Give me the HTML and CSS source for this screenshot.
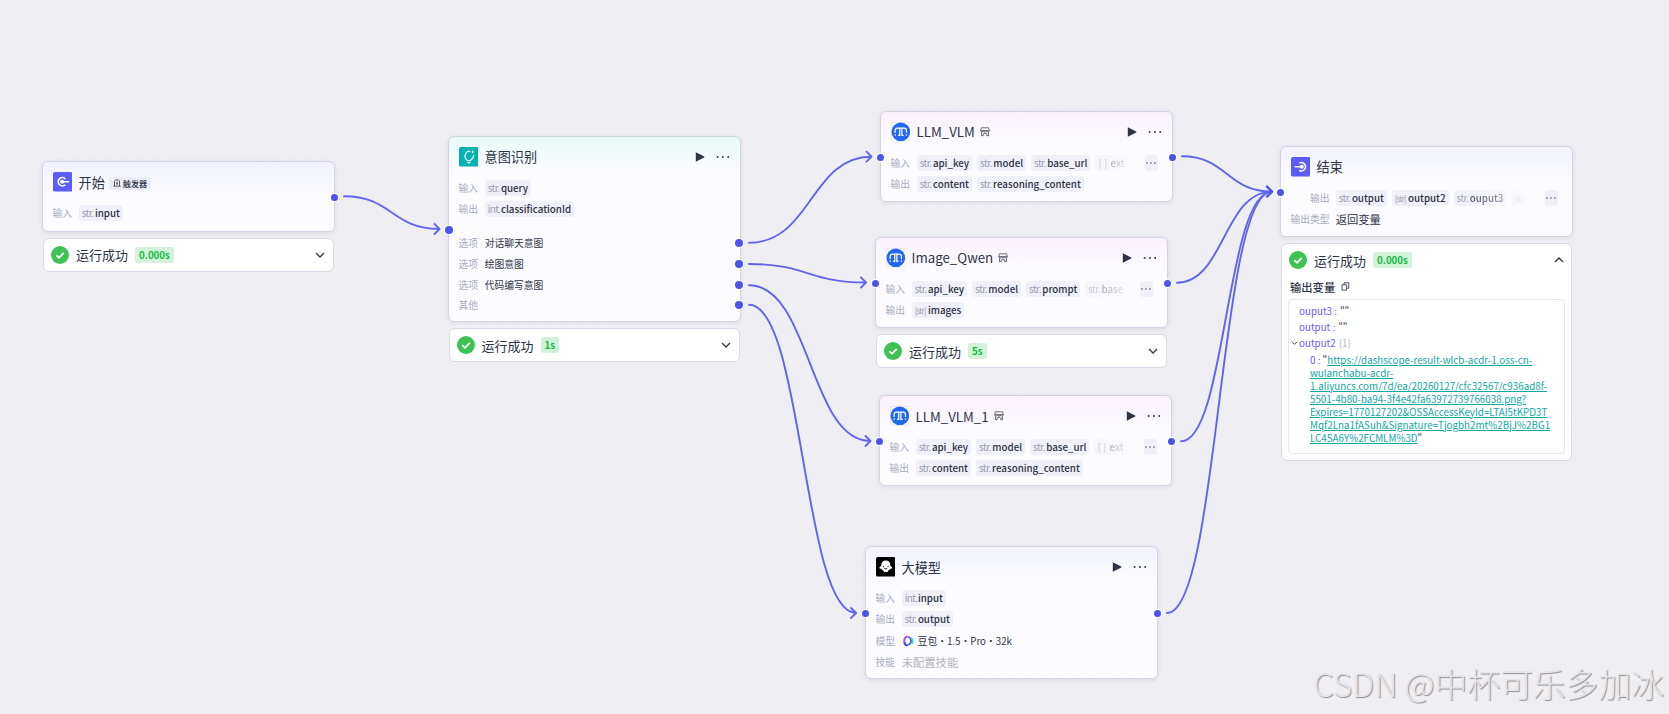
FILE: index.html
```html
<!DOCTYPE html>
<html lang="zh-CN">

<head>
<title>工作流</title>
<meta charset="utf-8" />
<meta name="viewport" content="width=device-width, initial-scale=1.0">
<link rel="stylesheet" href="styles.css">
</head>

<body>
<!-- shared icons -->
<svg class="defs" width="0" height="0">
  <symbol id="i-play" viewBox="0 0 10 10"><path d="M.8.3 9.200 4.600q.6.4 0 .8L.8 9.700z" fill="#2e3446"/></symbol>
  <symbol id="i-more" viewBox="0 0 14 4"><circle cx="1.6" cy="2" r=".95"/><circle cx="6.9" cy="2" r=".95"/><circle cx="12.2" cy="2" r=".95"/></symbol>
  <symbol id="i-down" viewBox="0 0 10 6"><path d="M1 1l4 4 4-4" fill="none" stroke="#2e3446" stroke-width="1.3"/></symbol>
  <symbol id="i-check" viewBox="0 0 18 18"><circle cx="9" cy="9" r="9" fill="#3ec254"/><path d="M5.3 9.2l2.7 2.6 4.8-5" fill="none" stroke="#fff" stroke-width="1.8"/></symbol>
  <symbol id="i-plugin" viewBox="0 0 20 20"><rect x=".4" y=".4" width="19.2" height="19.2" rx="2.5" fill="#fff" stroke="#d3d6e4" stroke-width=".7"/><circle cx="10" cy="10" r="9.5" fill="#2468f2"/><path d="M4.200 11.300V8.800Q4.200 6.300 6.600 6.300H13.400Q15.800 6.300 15.800 8.800V11.300M8.900 6.500V13.600H7.200M11.100 6.500V13.600H12.800" fill="none" stroke="#fff" stroke-width="1.25"/><circle cx="4.300" cy="13.300" r=".8" fill="#fff"/><circle cx="15.700" cy="13.300" r=".8" fill="#fff"/></symbol>
  <symbol id="i-shop" viewBox="0 0 10 10"><path d="M1.400.8h7.200M1.400.8.7 3.600h8.600L8.600.8M.7 3.600q.1 1.500 1.400 1.500t1.400-1.300q.2 1.300 1.500 1.300t1.500-1.300q.1 1.300 1.400 1.300t1.400-1.500M1.500 5.300v3.400h1.700V6.900q1.800-1.300 3.600 0v1.800h1.700V5.300" fill="none" stroke="#3d4356" stroke-width=".75"/></symbol>
</svg>

<div class="canvas">
  <svg class="edges" width="1669" height="714">
    <path d="M344 196.300C392 196.300 392 229 439 229"/>
    <path d="M749 242.800C811 242.800 811 156.700 871 156.700"/>
    <path d="M749 264C808 264 808 282.500 866 282.500"/>
    <path d="M749 285.200C810 285.200 810 441 870 441"/>
    <path d="M749 304.800C803 304.800 803 613 856 613"/>
    <path d="M1182 156.300C1227 156.300 1227 191.600 1272 191.600"/>
    <path d="M1177 282.800C1224 282.800 1224 191.600 1272 191.600"/>
    <path d="M1181 441.300C1226 441.300 1226 191.600 1272 191.600"/>
    <path d="M1167 613C1219 613 1219 191.600 1272 191.600"/>
    <g>
      <path d="M434.500 224l5 5-5 5"/>
      <path d="M866.500 151.700l5 5-5 5"/>
      <path d="M861 277.500l5 5-5 5"/>
      <path d="M865.500 436l5 5-5 5"/>
      <path d="M851 608l5 5-5 5"/>
      <path class="joined" d="M1267 186.600l5 5-5 5"/>
    </g>
  </svg>

  <!-- start -->
  <section class="node n-start">
    <div class="card card-start">
      <header>
        <svg class="icon" viewBox="0 0 20 20"><rect width="20" height="20" rx="2" fill="#5b5cf9"/><path d="M12.700 7A4.300 4.300 0 1 0 12.700 13M9 10h7.500" fill="none" stroke="#fff" stroke-width="1.600"/><circle cx="9.300" cy="10" r="2" fill="#fff"/></svg>
        <h2>开始</h2>
        <span class="trigger"><svg viewBox="0 0 8 8"><path d="M1.500 7V1.900L2.600.9h2.800l1.100 1V7M.4 7.200h7.200M4.400 2.400 3.300 4.300h1.500L3.700 6" fill="none" stroke="#2e3446" stroke-width=".8"/></svg>触发器</span>
      </header>
      <div class="row"><label>输入</label><span class="tag"><i>str.</i>input</span></div>
      <b class="port out"></b>
    </div>
    <div class="result"><svg class="check"><use href="#i-check"/></svg>运行成功<span class="time">0.000s</span><svg class="arrow"><use href="#i-down"/></svg></div>
  </section>

  <!-- intent -->
  <section class="node n-intent">
    <div class="card card-intent">
      <header>
        <svg class="icon" viewBox="0 0 20 20"><rect width="20" height="20" rx="2" fill="#00b2b2"/><path d="M11.400 4.300A5 5 0 0 0 7.300 12.500L8.800 14h2.600l1.500-1.500a5 5 0 0 0 2-4.500M8.500 16h3.200" fill="none" stroke="#fff" stroke-width="1.200"/><path d="M14 3l.6 1.500L16 5l-1.400.6L14 7l-.6-1.400L12 5l1.400-.5z" fill="#fff"/></svg>
        <h2>意图识别</h2>
        <svg class="play"><use href="#i-play"/></svg><svg class="more"><use href="#i-more"/></svg>
      </header>
      <div class="row"><label>输入</label><span class="tag"><i>str.</i>query</span></div>
      <div class="row"><label>输出</label><span class="tag"><i>int.</i>classificationId</span></div>
      <div class="options">
        <div class="row"><label>选项</label>对话聊天意图<b class="port out"></b></div>
        <div class="row"><label>选项</label>绘图意图<b class="port out"></b></div>
        <div class="row"><label>选项</label>代码编写意图<b class="port out"></b></div>
        <div class="row last"><label>其他</label><b class="port out"></b></div>
      </div>
      <b class="port in"></b>
    </div>
    <div class="result"><svg class="check"><use href="#i-check"/></svg>运行成功<span class="time">1s</span><svg class="arrow"><use href="#i-down"/></svg></div>
  </section>

  <!-- plugins -->
  <section class="node n-vlm">
    <div class="card card-plugin">
      <header>
        <svg class="icon"><use href="#i-plugin"/></svg>
        <h2>LLM_VLM</h2><svg class="shop"><use href="#i-shop"/></svg>
        <svg class="play"><use href="#i-play"/></svg><svg class="more"><use href="#i-more"/></svg>
      </header>
      <div class="row"><label>输入</label><span class="tag"><i>str.</i>api_key</span><span class="tag"><i>str.</i>model</span><span class="tag"><i>str.</i>base_url</span><span class="tag fade"><i class="obj">{ }</i>ext</span><span class="tag dots"><svg><use href="#i-more"/></svg></span></div>
      <div class="row"><label>输出</label><span class="tag"><i>str.</i>content</span><span class="tag"><i>str.</i>reasoning_content</span></div>
      <b class="port in"></b><b class="port out"></b>
    </div>
  </section>

  <section class="node n-qwen">
    <div class="card card-plugin">
      <header>
        <svg class="icon"><use href="#i-plugin"/></svg>
        <h2>Image_Qwen</h2><svg class="shop"><use href="#i-shop"/></svg>
        <svg class="play"><use href="#i-play"/></svg><svg class="more"><use href="#i-more"/></svg>
      </header>
      <div class="row"><label>输入</label><span class="tag"><i>str.</i>api_key</span><span class="tag"><i>str.</i>model</span><span class="tag"><i>str.</i>prompt</span><span class="tag fade"><i>str.</i>base</span><span class="tag dots"><svg><use href="#i-more"/></svg></span></div>
      <div class="row"><label>输出</label><span class="tag"><i class="arr">[str]</i>images</span></div>
      <b class="port in"></b><b class="port out"></b>
    </div>
    <div class="result"><svg class="check"><use href="#i-check"/></svg>运行成功<span class="time">5s</span><svg class="arrow"><use href="#i-down"/></svg></div>
  </section>

  <section class="node n-vlm1">
    <div class="card card-plugin">
      <header>
        <svg class="icon"><use href="#i-plugin"/></svg>
        <h2>LLM_VLM_1</h2><svg class="shop"><use href="#i-shop"/></svg>
        <svg class="play"><use href="#i-play"/></svg><svg class="more"><use href="#i-more"/></svg>
      </header>
      <div class="row"><label>输入</label><span class="tag"><i>str.</i>api_key</span><span class="tag"><i>str.</i>model</span><span class="tag"><i>str.</i>base_url</span><span class="tag fade"><i class="obj">{ }</i>ext</span><span class="tag dots"><svg><use href="#i-more"/></svg></span></div>
      <div class="row"><label>输出</label><span class="tag"><i>str.</i>content</span><span class="tag"><i>str.</i>reasoning_content</span></div>
      <b class="port in"></b><b class="port out"></b>
    </div>
  </section>

  <!-- model -->
  <section class="node n-model">
    <div class="card card-start card-model">
      <header>
        <svg class="icon" viewBox="0 0 20 20"><rect width="20" height="20" rx="2" fill="#000"/><path d="M10 3.600c3 0 4.500 2 4.500 4.400 0 1 .5 1.500 1.600 2.300.8.700.4 1.700-.6 1.700-.5 0-.9 0-1.200.400-.5.800-1.200 1-1.700 1 0 1-.8 2-1.600 1.900H9c-.8.100-1.600-.9-1.600-1.900-.5 0-1.200-.2-1.700-1-.3-.4-.7-.4-1.200-.4-1 0-1.400-1-.6-1.700 1.100-.8 1.600-1.300 1.600-2.300C5.500 5.600 7 3.600 10 3.600z" fill="#fff"/><path d="M7.600 9.200v1.200M12.400 9.200v1.200M8.500 11.500q1.500 1.300 3 0" fill="none" stroke="#000" stroke-width=".9"/></svg>
        <h2>大模型</h2>
        <svg class="play"><use href="#i-play"/></svg><svg class="more"><use href="#i-more"/></svg>
      </header>
      <div class="row"><label>输入</label><span class="tag"><i>int.</i>input</span></div>
      <div class="row"><label>输出</label><span class="tag"><i>str.</i>output</span></div>
      <div class="row model"><label>模型</label><svg class="doubao" viewBox="0 0 12 12" fill="none" stroke-width="2"><path d="M3 9.500C1.500 7 2 1.700 5.500 1.700" stroke="#a05bf5"/><path d="M5 10.300C3.800 10.500 3 9.500 2.600 7.500" stroke="#3b46f6"/><path d="M5.500 1.700q1.600.2 2.500 1.500" stroke="#a05bf5"/><path d="M7.800 3c2.800 2.500.5 7-2.800 7.300" stroke="#3b46f6" stroke-width="1.600"/><path d="M8.800 3c2.400 1.500 2.400 4.500.6 5.800" stroke="#3fd6c0" stroke-width="1.800"/></svg>豆包・1.5・Pro・32k</div>
      <div class="row"><label>技能</label><span class="empty">未配置技能</span></div>
      <b class="port in"></b><b class="port out"></b>
    </div>
  </section>

  <!-- end -->
  <section class="node n-end">
    <div class="card card-start card-end">
      <header>
        <svg class="icon" viewBox="0 0 20 20"><rect width="20" height="20" rx="2" fill="#5b5cf9"/><path d="M8.500 6.200A4.300 4.300 0 1 1 8.500 13.800M3.800 10H11" fill="none" stroke="#fff" stroke-width="1.600"/><circle cx="11" cy="10" r="2" fill="#fff"/></svg>
        <h2>结束</h2>
      </header>
      <div class="row"><label>输出</label><span class="tag"><i>str.</i>output</span><span class="tag"><i class="arr">[str]</i>output2</span><span class="tag half"><i>str.</i>ouput3</span><span class="tag fade rest"><i>str.</i></span><span class="tag dots"><svg><use href="#i-more"/></svg></span></div>
      <div class="row"><label>输出类型</label><span class="kind">返回变量</span></div>
      <b class="port in"></b>
    </div>
    <div class="result open">
      <div class="line"><svg class="check"><use href="#i-check"/></svg>运行成功<span class="time">0.000s</span><svg class="arrow up"><use href="#i-down"/></svg></div>
      <h3>输出变量<svg viewBox="0 0 9 9"><path d="M1 2.800h4.600v5.400H1zM3 2.800V.8h4.800v5.400H5.800" fill="none" stroke="#3d4356" stroke-width=".9"/></svg></h3>
      <div class="json">
        <p><em>ouput3 :</em> ""</p>
        <p><em>output :</em> ""</p>
        <p><svg class="fold" viewBox="0 0 10 6"><use href="#i-down"/></svg><em>output2</em> <s>{1}</s></p>
        <div class="url"><em>0 :</em> "<a>https://dashscope-result-wlcb-acdr-1.oss-cn-<br>wulanchabu-acdr-<br>1.aliyuncs.com/7d/ea/20260127/cfc32567/c936ad8f-<br>5501-4b80-ba94-3f4e42fa63972739766038.png?<br>Expires=1770127202&amp;OSSAccessKeyId=LTAI5tKPD3T<br>Mqf2Lna1fASuh&amp;Signature=Tjogbh2mt%2BjJ%2BG1<br>LC4SA6Y%2FCMLM%3D</a>"</div>
      </div>
    </div>
  </section>

  <div class="watermark">CSDN @中杯可乐多加冰</div>
</div>
</body>

</html>
```

FILE: styles.css
```css
body {
  margin: 0;
  background-color: #efeef3;
  font-family: "Noto Sans CJK SC", sans-serif;
  color: #2e3446;
}

h2, h3, p {
  margin: 0;
  font-weight: normal;
}

i, em {
  font-style: normal;
}

.defs {
  position: absolute;
}

/* free canvas: the nodes sit at their own coordinates */
.canvas {
  position: relative;
  width: 1669px;
  height: 714px;
  overflow: hidden;
  background-image: radial-gradient(circle, #ebeaf0 1px, transparent 1.3px);
  background-size: 16.3px 16.3px;
  background-position: 4px 4px;
}

.edges {
  position: absolute;
  left: 0;
  top: 0;
  fill: none;
  stroke: #6165ee;
  stroke-width: 1.9;
  stroke-linecap: round;
  stroke-linejoin: round;
}

.joined {
  stroke: #4d53e8;
  stroke-width: 2.4;
}

.node {
  position: absolute;
  width: 293px;
}

.n-start { left: 42px; top: 161px; }
.n-intent { left: 448px; top: 136px; }
.n-vlm { left: 880px; top: 111px; }
.n-qwen { left: 875px; top: 237px; }
.n-vlm1 { left: 879px; top: 395px; }
.n-model { left: 865px; top: 546px; }
.n-end { left: 1280px; top: 146px; }

.card {
  position: relative;
  box-sizing: border-box;
  height: 91px;
  padding: 10px 9.5px 0;
  border: 1px solid #d3d5e4;
  border-radius: 6px;
  background: #fcfcff;
  box-shadow: 0 1px 4px rgba(50, 50, 90, .1);
}

.card-start { background: linear-gradient(#f2f2ff, #fcfcff 36px); }
.card-intent { background: linear-gradient(#e8faf8, #fcfcff 36px); }
.card-plugin { background: linear-gradient(#fbf1fe, #fcfcff 36px); }

.n-start .card { height: 71px; }
.n-intent .card { height: 186px; }
.n-model .card { height: 133px; }

header {
  display: flex;
  align-items: center;
  height: 20px;
  margin-bottom: 12.6px;
}

header .icon {
  width: 19.6px;
  height: 19.6px;
  margin-right: 6.4px;
}

h2 {
  font-size: 13.15px;
  line-height: 20px;
}

.n-start h2,
.n-vlm1 h2,
.n-model h2 {
  padding-top: 1px;
}

.card-plugin h2 {
  font-size: 13.3px;
}

.trigger {
  display: flex;
  align-items: center;
  height: 13px;
  margin: 2px 0 0 4px;
  padding: 0 4px;
  border-radius: 3px;
  background: #ededf7;
  font-size: 8.1px;
  font-weight: 500;
}

.trigger svg {
  width: 8px;
  height: 8px;
  margin-right: 2px;
}

.shop {
  width: 10px;
  height: 10px;
  margin-left: 5px;
}

.play {
  width: 10px;
  height: 10px;
  margin-left: auto;
}

.more {
  width: 14px;
  height: 4px;
  margin: 0 1px 0 11px;
  fill: #2e3446;
}

.row {
  display: flex;
  align-items: center;
  height: 16.2px;
  margin-bottom: 5px;
  font-size: 9.75px;
  white-space: nowrap;
}

.row label {
  width: 20px;
  flex: none;
  margin-right: 6.2px;
  color: #a9acc2;
}

.tag {
  box-sizing: border-box;
  flex: none;
  height: 16px;
  margin-right: 5px;
  padding: 0 3px;
  border-radius: 3px;
  background: #f0f0f8;
  font-size: 9.75px;
  line-height: 16.5px;
  font-weight: 500;
}

.tag i {
  display: inline-block;
  width: 13.2px;
  color: #9a9db3;
  font-size: 10px;
  font-weight: normal;
  letter-spacing: -.6px;
}

.tag .arr {
  width: 13.2px;
  font-size: 8px;
  letter-spacing: -.8px;
}

.tag .obj {
  width: 12px;
  letter-spacing: 0;
}

.fade {
  margin-right: 0;
  opacity: .6;
  -webkit-mask-image: linear-gradient(90deg, #000, rgba(0, 0, 0, .15));
  mask-image: linear-gradient(90deg, #000, rgba(0, 0, 0, .15));
}

.half {
  -webkit-mask-image: linear-gradient(90deg, #000, rgba(0, 0, 0, .45));
  mask-image: linear-gradient(90deg, #000, rgba(0, 0, 0, .45));
}

.rest {
  opacity: .3;
}

.tag.dots {
  display: flex;
  align-items: center;
  width: 13px;
  margin: 0 5px 0 auto;
  padding: 0 1.5px;
}

.dots svg {
  width: 14px;
  height: 4px;
  transform: scale(.75);
  margin: 0 -2px;
  fill: #2e3446;
}

.options {
  margin: 17.5px -10.5px 0 0;
}

.options .row {
  position: relative;
}

.options .last {
  margin-top: -1px;
}

.model {
  margin-top: 6px;
}

.doubao {
  width: 12px;
  height: 12px;
  margin-right: 4px;
}

.empty {
  color: #b3b3bb;
  font-size: 11.3px;
}

.card-end .row label {
  width: 39px;
  text-align: right;
}

.kind {
  font-size: 11.3px;
}

.port {
  position: absolute;
  top: 50%;
  width: 7px;
  height: 7px;
  margin-top: -3px;
  border-radius: 50%;
  background: #4d53e8;
  box-shadow: 0 0 0 1px #fff;
}

.in { left: -4px; }
.out { right: -4px; }

.card-intent > .in {
  width: 8px;
  height: 8px;
}

.options .out {
  right: -2px;
  width: 8px;
  height: 8px;
  margin-top: -4px;
}

.result {
  box-sizing: border-box;
  display: flex;
  align-items: center;
  width: 291px;
  height: 34px;
  margin: 6px 1px 0;
  padding: 0 8px 0 7px;
  border: 1px solid #d9dae8;
  border-radius: 6px;
  background: #fff;
  font-size: 13px;
}

.n-intent .result {
  padding-left: 6.5px;
}

.n-start .result {
  margin-top: 5.5px;
}

.check {
  width: 18px;
  height: 18px;
  margin-right: 7px;
}

.time {
  height: 16px;
  margin-left: 7px;
  padding: 0 4px;
  border-radius: 3px;
  background: #d2f3da;
  color: #14b83f;
  font-size: 9.7px;
  line-height: 16.5px;
  font-weight: bold;
}

.arrow {
  width: 10px;
  height: 6px;
  margin-left: auto;
}

.up {
  transform: rotate(180deg);
}

.open {
  display: block;
  height: 218px;
  padding: 0 6px;
}

.line {
  display: flex;
  align-items: center;
  height: 32px;
  padding: 0 1px;
}

h3 {
  display: flex;
  align-items: center;
  height: 21px;
  padding-left: 2px;
  font-size: 11.3px;
  font-weight: 500;
}

h3 svg {
  width: 9px;
  height: 9px;
  margin-left: 6px;
}

.json {
  box-sizing: border-box;
  height: 155px;
  margin-top: 2px;
  padding: 3px 0 0 10px;
  border: 1px solid #e6e6ef;
  border-radius: 4px;
  font-size: 9.8px;
}

.json p {
  display: flex;
  gap: 3px;
  height: 16px;
  line-height: 16px;
}

.json em { color: #6b5cf5; }
.json s { color: #b5b6c4; text-decoration: none; }

.json a {
  color: #12a8a8;
  text-decoration: underline;
}

.fold {
  width: 7px;
  height: 4px;
  margin: 6px -2px 0 -8px;
}

.url {
  margin: 2.5px 0 0 11px;
  line-height: 13px;
  white-space: nowrap;
}

.watermark {
  position: absolute;
  right: 5px;
  bottom: 8px;
  color: #e5e5e9;
  font-size: 32.8px;
  font-weight: 300;
  text-shadow: 1px 1px 1px #8f8f94;
  white-space: nowrap;
}
```
